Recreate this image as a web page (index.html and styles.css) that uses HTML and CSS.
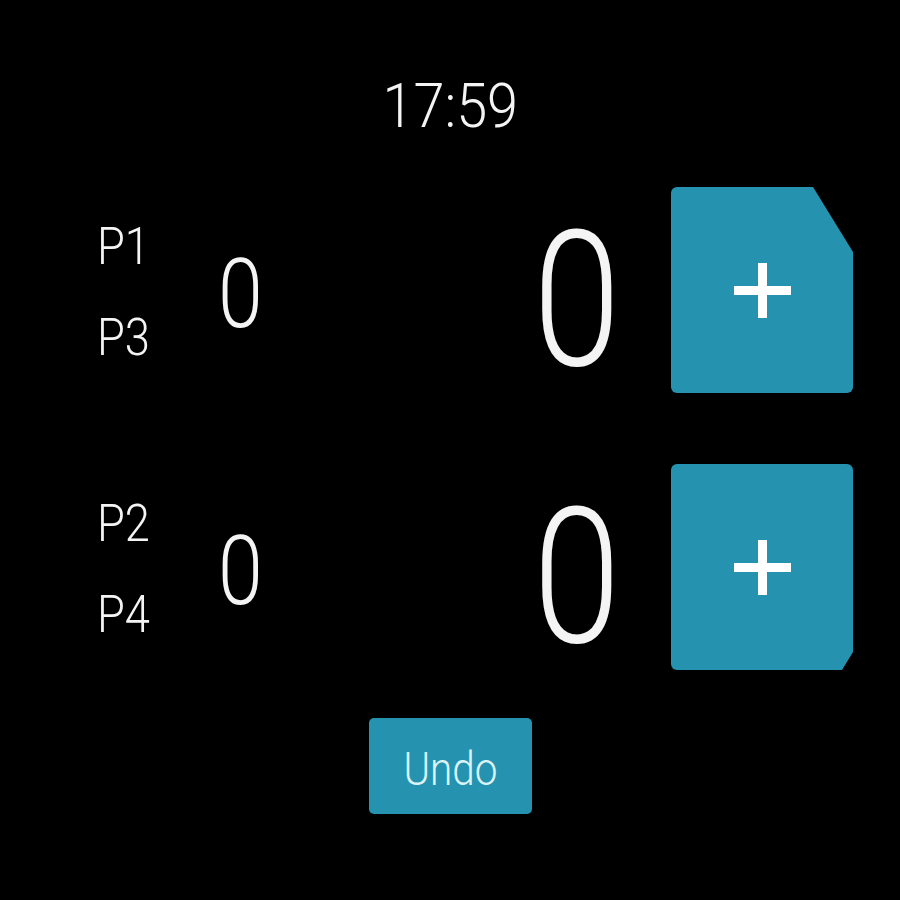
FILE: index.html
```html
<html>
<head>
<meta http-equiv="Content-Type" content="text/html; charset=UTF-8" />
<meta name="viewport" content="width=device-width,initial-scale=1.0">
<link rel="stylesheet" href="styles.css">
</head>
<body>

<div class="watch">
	<div class="clock"><span>17:59</span></div>

	<div class="team">
		<div class="players">
			<span>P1</span>
			<span>P3</span>
		</div>
		<div class="games">0</div>
		<div class="points">0</div>
		<button class="add add-top">
			<svg width="57" height="55" viewBox="0 0 57 55"><rect x="0" y="23" width="57" height="9" fill="#fff"/><rect x="24" y="0" width="9" height="55" fill="#fff"/></svg>
		</button>
	</div>

	<div class="team team-bottom">
		<div class="players">
			<span>P2</span>
			<span>P4</span>
		</div>
		<div class="games">0</div>
		<div class="points">0</div>
		<button class="add add-bottom">
			<svg width="57" height="55" viewBox="0 0 57 55"><rect x="0" y="23" width="57" height="9" fill="#fff"/><rect x="24" y="0" width="9" height="55" fill="#fff"/></svg>
		</button>
	</div>

	<div class="actions">
		<button class="undo"><span>Undo</span></button>
	</div>
</div>

</body>
</html>
```

FILE: styles.css
```css
:root {
	--color-bg: #000000;
	--color-fg: #f4f4f4;
	--color-button: #2593b0;
	--color-button-text: #dcf3f8;
}

body {
	margin: 0;
	background-color: var(--color-bg);
	color: var(--color-fg);
	font-family: Roboto, "Noto Sans", sans-serif;
	font-weight: 300;
}

.watch {
	width: 900px;
	height: 900px;
	display: flex;
	flex-direction: column;
}

/* the watch font is narrower than Roboto, squeeze it a bit */
.clock {
	margin-top: 75px;
	font-size: 62px;
	line-height: 62px;
	text-align: center;
}

.clock span {
	display: inline-block;
	transform: scaleX(0.9);
}

.team {
	margin-top: 50px;
	height: 206px;
	display: flex;
	align-items: flex-start;
	padding-left: 97px;
	padding-right: 47px;
}

.team-bottom {
	margin-top: 71px;
}

.players {
	width: 121px;
	margin-top: 34px;
	display: flex;
	flex-direction: column;
	align-items: flex-start;
	gap: 39px;
	font-size: 52px;
	line-height: 52px;
}

.players span {
	transform: scaleX(0.87);
	transform-origin: left;
}

.games {
	margin-top: 59px;
	font-size: 96px;
	line-height: 96px;
	transform: scaleX(0.84);
	transform-origin: left;
}

.points {
	margin-left: auto;
	margin-top: 18px;
	font-size: 190px;
	line-height: 190px;
	transform: scaleX(0.83);
	transform-origin: right;
}

.add {
	margin-left: 51px;
	width: 182px;
	height: 206px;
	border: none;
	border-radius: 6px;
	background-color: var(--color-button);
	display: flex;
	align-items: center;
	justify-content: center;
	padding: 0;
}

.add-top {
	clip-path: polygon(0 0, 142px 0, 100% 65px, 100% 100%, 0 100%);
}

.add-bottom {
	clip-path: polygon(0 0, 100% 0, 100% 188px, 171px 100%, 0 100%);
}

.actions {
	margin-top: 48px;
	display: flex;
	justify-content: center;
}

.undo {
	width: 163px;
	height: 96px;
	border: none;
	border-radius: 5px;
	background-color: var(--color-button);
	color: var(--color-button-text);
	font-family: Roboto, "Noto Sans", sans-serif;
	font-weight: 300;
	font-size: 46px;
	padding: 6px 0 0 0;
}

.undo span {
	display: inline-block;
	transform: scaleX(0.88);
}
```
